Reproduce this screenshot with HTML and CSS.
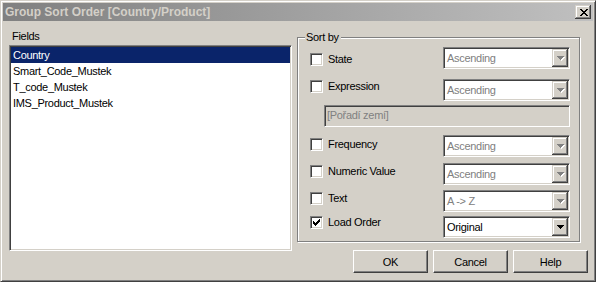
FILE: index.html
```html
<!DOCTYPE html>
<html lang="en">
<head>
  <meta charset="UTF-8" />
  <title>Group Sort Order</title>
  <link rel="stylesheet" href="styles.css">
</head>
<body>
  <div class="dialog">
    <div class="titlebar">
      <span class="title">Group Sort Order [Country/Product]</span>
      <span class="close-btn">
        <svg width="8" height="7" viewBox="0 0 8 7" shape-rendering="crispEdges">
          <path d="M0 0h2v1H0zM6 0h2v1H6zM1 1h2v1H1zM5 1h2v1H5zM2 2h4v1H2zM3 3h2v1H3zM2 4h4v1H2zM1 5h2v1H1zM5 5h2v1H5zM0 6h2v1H0zM6 6h2v1H6z" fill="#000"/>
        </svg>
      </span>
    </div>

    <div class="client">
      <div class="fields">
        <div class="fields-label">Fields</div>
        <ul class="listbox">
          <li class="selected">Country</li>
          <li>Smart_Code_Mustek</li>
          <li>T_code_Mustek</li>
          <li>IMS_Product_Mustek</li>
        </ul>
      </div>

      <div class="side">
        <div class="groupbox">
          <div class="groupbox-title">Sort by</div>

          <div class="sort-row row-state">
            <label class="check"><span class="checkbox"></span>State</label>
            <div class="combo disabled"><span class="combo-value">Ascending</span><span class="combo-arrow"><svg width="8" height="5" viewBox="0 0 8 5" shape-rendering="crispEdges"><path d="M1 1h7v1H1zM2 2h5v1H2zM3 3h3v1H3zM4 4h1v1H4z" fill="#fff"/><path d="M0 0h7v1H0zM1 1h5v1H1zM2 2h3v1H2zM3 3h1v1H3z" fill="#808080"/></svg></span></div>
          </div>

          <div class="sort-row row-expression">
            <label class="check"><span class="checkbox"></span>Expression</label>
            <div class="combo disabled"><span class="combo-value">Ascending</span><span class="combo-arrow"><svg width="8" height="5" viewBox="0 0 8 5" shape-rendering="crispEdges"><path d="M1 1h7v1H1zM2 2h5v1H2zM3 3h3v1H3zM4 4h1v1H4z" fill="#fff"/><path d="M0 0h7v1H0zM1 1h5v1H1zM2 2h3v1H2zM3 3h1v1H3z" fill="#808080"/></svg></span></div>
          </div>
          <div class="expr-field">[Pořadí zemí]</div>

          <div class="sort-row row-frequency">
            <label class="check"><span class="checkbox"></span>Frequency</label>
            <div class="combo disabled"><span class="combo-value">Ascending</span><span class="combo-arrow"><svg width="8" height="5" viewBox="0 0 8 5" shape-rendering="crispEdges"><path d="M1 1h7v1H1zM2 2h5v1H2zM3 3h3v1H3zM4 4h1v1H4z" fill="#fff"/><path d="M0 0h7v1H0zM1 1h5v1H1zM2 2h3v1H2zM3 3h1v1H3z" fill="#808080"/></svg></span></div>
          </div>

          <div class="sort-row row-numeric">
            <label class="check"><span class="checkbox"></span>Numeric Value</label>
            <div class="combo disabled"><span class="combo-value">Ascending</span><span class="combo-arrow"><svg width="8" height="5" viewBox="0 0 8 5" shape-rendering="crispEdges"><path d="M1 1h7v1H1zM2 2h5v1H2zM3 3h3v1H3zM4 4h1v1H4z" fill="#fff"/><path d="M0 0h7v1H0zM1 1h5v1H1zM2 2h3v1H2zM3 3h1v1H3z" fill="#808080"/></svg></span></div>
          </div>

          <div class="sort-row row-text">
            <label class="check"><span class="checkbox"></span>Text</label>
            <div class="combo disabled"><span class="combo-value">A -&gt; Z</span><span class="combo-arrow"><svg width="8" height="5" viewBox="0 0 8 5" shape-rendering="crispEdges"><path d="M1 1h7v1H1zM2 2h5v1H2zM3 3h3v1H3zM4 4h1v1H4z" fill="#fff"/><path d="M0 0h7v1H0zM1 1h5v1H1zM2 2h3v1H2zM3 3h1v1H3z" fill="#808080"/></svg></span></div>
          </div>

          <div class="sort-row row-load">
            <label class="check"><span class="checkbox checked"><svg width="7" height="7" viewBox="0 0 7 7" shape-rendering="crispEdges"><path d="M6 0h1v1H6zM5 1h2v1H5zM0 2h1v1H0zM4 2h3v1H4zM0 3h2v1H0zM3 3h3v1H3zM0 4h5v1H0zM1 5h3v1H1zM2 6h1v1H2z" fill="#000"/></svg></span>Load Order</label>
            <div class="combo"><span class="combo-value">Original</span><span class="combo-arrow"><svg width="8" height="5" viewBox="0 0 8 5" shape-rendering="crispEdges"><path d="M0 0h7v1H0zM1 1h5v1H1zM2 2h3v1H2zM3 3h1v1H3z" fill="#000"/></svg></span></div>
          </div>
        </div>

        <div class="buttons">
          <button class="btn">OK</button>
          <button class="btn">Cancel</button>
          <button class="btn">Help</button>
        </div>
      </div>
    </div>
  </div>
</body>
</html>
```

FILE: styles.css
```css
* {
  box-sizing: border-box;
}
body {
  margin: 0;
  background: #d4d0c8;
  font-family: "Liberation Sans", Arial, sans-serif;
  font-size: 11px;
  letter-spacing: -0.3px;
  color: #000;
}
svg {
  display: block;
}

/* window frame */
.dialog {
  width: 596px;
  height: 282px;
  border: 1px solid;
  border-color: #d4d0c8 #404040 #404040 #d4d0c8;
  box-shadow: inset 1px 1px 0 #fff, inset -1px -1px 0 #808080;
  padding: 2px;
  background: #d4d0c8;
}
.titlebar {
  height: 18px;
  margin-bottom: 1px;
  display: flex;
  align-items: center;
  padding: 0 2px;
  background: linear-gradient(to right, #808080, #c0c0c0);
}
.title {
  flex: 1;
  color: #d4d0c8;
  font-size: 12px;
  font-weight: bold;
  letter-spacing: 0;
  line-height: 18px;
}
.close-btn {
  width: 16px;
  height: 14px;
  display: flex;
  align-items: center;
  justify-content: center;
  padding-left: 1px;
  background: #d4d0c8;
  box-shadow: inset -1px -1px 0 #404040, inset 1px 1px 0 #d4d0c8, inset -2px -2px 0 #808080, inset 2px 2px 0 #fff;
}

/* client area */
.client {
  display: flex;
  height: 257px;
}
.fields {
  width: 283px;
  margin-left: 6px;
}
.fields-label {
  height: 23px;
  padding: 6px 0 0 3px;
  line-height: 16px;
}
.listbox {
  list-style: none;
  margin: 0;
  padding: 1px 0 0;
  height: 206px;
  background: #fff;
  border: 1px solid;
  border-color: #808080 #fff #fff #808080;
  box-shadow: inset 1px 1px 0 #404040, inset -1px -1px 0 #d4d0c8;
}
.listbox li {
  height: 16px;
  line-height: 16px;
  margin: 0 1px;
  padding-left: 2px;
}
.listbox li.selected {
  background: #0a246a;
  color: #fff;
}

.side {
  margin-left: 5px;
  flex: 1;
  display: flex;
  flex-direction: column;
}
.groupbox {
  width: 283px;
  height: 205px;
  margin-top: 15px;
  border: 1px solid #808080;
  box-shadow: inset 1px 1px 0 #fff, 1px 1px 0 #fff;
}
.groupbox-title {
  width: fit-content;
  margin: -8px 0 0 7px;
  padding: 0 2px 0 1px;
  line-height: 14px;
  background: #d4d0c8;
}

/* sort rows */
.sort-row {
  display: flex;
  align-items: flex-start;
  padding-left: 12px;
}
.check {
  width: 133px;
  display: flex;
  align-items: center;
  line-height: 13px;
}
.checkbox {
  width: 13px;
  height: 13px;
  margin-right: 5px;
  padding: 2px;
  background: #fff;
  border: 1px solid;
  border-color: #808080 #fff #fff #808080;
  box-shadow: inset 1px 1px 0 #404040, inset -1px -1px 0 #d4d0c8;
}
.combo {
  width: 127px;
  height: 22px;
  display: flex;
  padding: 1px;
  background: #fff;
  border: 1px solid;
  border-color: #808080 #fff #fff #808080;
  box-shadow: inset 1px 1px 0 #404040, inset -1px -1px 0 #d4d0c8;
}
.combo-value {
  flex: 1;
  padding-left: 2px;
  line-height: 18px;
}
.combo.disabled .combo-value {
  color: #808080;
}
.combo-arrow {
  width: 16px;
  height: 18px;
  display: flex;
  align-items: center;
  justify-content: center;
  padding: 0 0 0 1px;
  background: #d4d0c8;
  box-shadow: inset -1px -1px 0 #404040, inset 1px 1px 0 #d4d0c8, inset -2px -2px 0 #808080, inset 2px 2px 0 #fff;
}
.expr-field {
  width: 246px;
  height: 22px;
  margin: 4px 0 0 26px;
  padding-left: 2px;
  line-height: 18px;
  color: #808080;
  border: 1px solid;
  border-color: #808080 #fff #fff #808080;
  box-shadow: inset 1px 1px 0 #404040, inset -1px -1px 0 #d4d0c8;
}

.row-state { margin-top: 3px; }
.row-state .check { margin-top: 6px; }
.row-expression { margin-top: 10px; }
.row-expression .check { margin-top: 1px; }
.row-frequency { margin-top: 8px; }
.row-frequency .check { margin-top: 3px; }
.row-numeric { margin-top: 6px; }
.row-numeric .check { margin-top: 2px; }
.row-text { margin-top: 5px; }
.row-text .check { margin-top: 2px; }
.row-load { margin-top: 4px; }

/* buttons */
.buttons {
  display: flex;
  justify-content: flex-end;
  gap: 5px;
  margin-top: 8px;
  padding-right: 5px;
}
.btn {
  width: 75px;
  height: 23px;
  padding: 0;
  font: inherit;
  letter-spacing: inherit;
  color: #000;
  background: #d4d0c8;
  border: 1px solid;
  border-color: #fff #404040 #404040 #fff;
  box-shadow: inset -1px -1px 0 #808080;
}
```
